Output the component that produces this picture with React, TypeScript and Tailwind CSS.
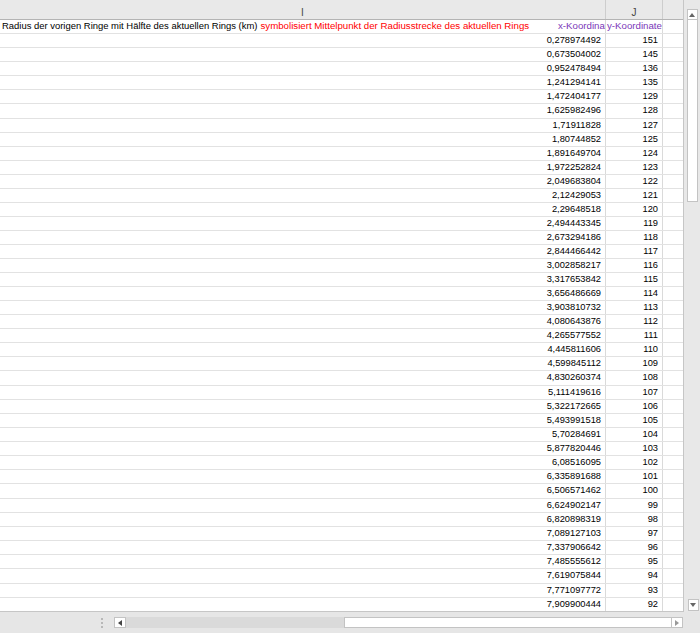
import React from 'react';

const rows: [string, string][] = [
  ['0,278974492', '151'],
  ['0,673504002', '145'],
  ['0,952478494', '136'],
  ['1,241294141', '135'],
  ['1,472404177', '129'],
  ['1,625982496', '128'],
  ['1,71911828', '127'],
  ['1,80744852', '125'],
  ['1,891649704', '124'],
  ['1,972252824', '123'],
  ['2,049683804', '122'],
  ['2,12429053', '121'],
  ['2,29648518', '120'],
  ['2,494443345', '119'],
  ['2,673294186', '118'],
  ['2,844466442', '117'],
  ['3,002858217', '116'],
  ['3,317653842', '115'],
  ['3,656486669', '114'],
  ['3,903810732', '113'],
  ['4,080643876', '112'],
  ['4,265577552', '111'],
  ['4,445811606', '110'],
  ['4,599845112', '109'],
  ['4,830260374', '108'],
  ['5,111419616', '107'],
  ['5,322172665', '106'],
  ['5,493991518', '105'],
  ['5,70284691', '104'],
  ['5,877820446', '103'],
  ['6,08516095', '102'],
  ['6,335891688', '101'],
  ['6,506571462', '100'],
  ['6,624902147', '99'],
  ['6,820898319', '98'],
  ['7,089127103', '97'],
  ['7,337906642', '96'],
  ['7,485555612', '95'],
  ['7,619075844', '94'],
  ['7,771097772', '93'],
  ['7,909900444', '92'],
];

const tallRows = [5, 24, 32, 38];

function Arrow({ dir, className }: { dir: 'up' | 'down' | 'left' | 'right'; className?: string }) {
  const pts = {
    up: '0,4 3,0 6,4',
    down: '0,0 6,0 3,4',
    left: '4,0 4,6 0,3',
    right: '0,0 0,6 4,3',
  }[dir];
  const vertical = dir === 'up' || dir === 'down';
  return (
    <svg width={vertical ? 6 : 4} height={vertical ? 4 : 6} viewBox={vertical ? '0 0 6 4' : '0 0 4 6'} className={className}>
      <polygon points={pts} fill="currentColor" />
    </svg>
  );
}

export default function App() {
  return (
    <div className="w-[700px] h-[633px] bg-white flex flex-col overflow-hidden font-['Liberation_Sans',Arial,sans-serif] text-[9.3px] text-black">
      <div className="flex h-[612px]">
        {/* Grid */}
        <div className="w-[684px] flex flex-col border-r border-[#c6c6c6]">
          {/* Column headers */}
          <div className="h-[20px] flex bg-[#e9e9e9] border-b border-[#b4b4b4] text-[10px] text-[#444]">
            <div className="w-[606px] border-r border-[#cdcdcd] flex items-center justify-center pt-[6px]">I</div>
            <div className="w-[57px] border-r border-[#cdcdcd] flex items-center justify-center pt-[6px]">J</div>
            <div className="flex-1" />
          </div>

          {/* Title row */}
          <div className="h-[14px] flex border-b border-[#e2e2e2]">
            <div className="w-[606px] border-r border-[#dadada] flex items-center overflow-hidden whitespace-nowrap relative">
              <span className="pl-[2px] text-[9.45px]">Radius der vorigen Ringe mit Hälfte des aktuellen Rings (km)</span>
              <span className="pl-[3px] text-[9.7px] text-[#ff0000]">symbolisiert Mittelpunkt der Radiusstrecke des aktuellen Rings</span>
              <span className="absolute left-[558px] text-[9.7px] text-[#7a36b8]">x-Koordinate</span>
            </div>
            <div className="w-[57px] border-r border-[#dadada] flex items-center overflow-hidden whitespace-nowrap pl-[1px] text-[9.7px] text-[#7a36b8]">
              y-Koordinate
            </div>
            <div className="flex-1" />
          </div>

          {/* Data rows */}
          {rows.map(([x, y], i) => (
            <div
              key={i}
              className={`flex border-b ${tallRows.includes(i) ? 'h-[15px]' : 'h-[14px]'} ${i === rows.length - 1 ? 'border-[#c6c6c6]' : 'border-[#e2e2e2]'}`}
            >
              <div className="w-[606px] border-r border-[#dadada] flex items-center justify-end pr-[4px]">{x}</div>
              <div className="w-[57px] border-r border-[#dadada] flex items-center justify-end pr-[4px]">{y}</div>
              <div className="flex-1" />
            </div>
          ))}
        </div>

        {/* Vertical scrollbar */}
        <div className="w-[16px] bg-[#e8e8e8] flex flex-col items-center pt-[9px] pb-[1px]">
          <div className="w-[11px] h-[11px] bg-white border border-[#c3c3c3] flex items-center justify-center text-[#666]">
            <Arrow dir="up" />
          </div>
          <div className="w-[11px] h-[182px] bg-white border border-[#c3c3c3] border-t-0" />
          <div className="flex-1" />
          <div className="w-[11px] h-[12px] bg-white border border-[#c3c3c3] flex items-center justify-center text-[#666] ml-[2px]">
            <Arrow dir="down" />
          </div>
        </div>
      </div>

      {/* Horizontal scrollbar */}
      <div className="h-[21px] bg-[#e6e6e6] flex items-start pt-[5px]">
        <div className="ml-[101px] w-[2px] h-[11px] flex flex-col justify-center gap-[2px]">
          <div className="w-[2px] h-[2px] bg-[#b8b8b8]" />
          <div className="w-[2px] h-[2px] bg-[#b8b8b8]" />
          <div className="w-[2px] h-[2px] bg-[#b8b8b8]" />
        </div>
        <div className="ml-[11px] w-[12px] h-[11px] bg-white border border-[#c3c3c3] flex items-center justify-center text-[#444]">
          <Arrow dir="left" />
        </div>
        <div className="w-[218px] h-[11px] bg-[#dadada]" />
        <div className="w-[328px] h-[11px] bg-white border border-[#c3c3c3]" />
        <div className="w-[11px] h-[11px] bg-white border border-[#c3c3c3] border-l-0 flex items-center justify-center text-[#999]">
          <Arrow dir="right" />
        </div>
      </div>
    </div>
  );
}
